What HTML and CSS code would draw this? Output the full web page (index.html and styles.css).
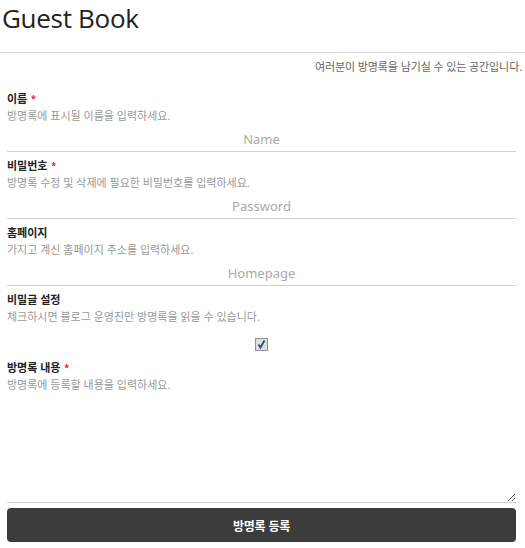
FILE: index.html
```html
<!DOCTYPE html>
<html lang="ko">

<head>
    <meta charset="UTF-8">
    <meta name="viewport" content="width=device-width, initial-scale=1.0">
    <title>Guest Book</title>
    <link rel="stylesheet" href="styles.css">
</head>

<body>

    <div class="header">
        <h1>Guest Book</h1>
    </div>
    <p class="intro">여러분이 방명록을 남기실 수 있는 공간입니다.</p>

    <form class="guest-form">
        <div class="field">
            <label for="name">이름 <span class="req">*</span></label>
            <p class="help">방명록에 표시될 이름을 입력하세요.</p>
            <input type="text" id="name" placeholder="Name">
        </div>

        <div class="field">
            <label for="password">비밀번호 <span class="req">*</span></label>
            <p class="help">방명록 수정 및 삭제에 필요한 비밀번호를 입력하세요.</p>
            <input type="password" id="password" placeholder="Password">
        </div>

        <div class="field">
            <label for="homepage">홈페이지</label>
            <p class="help">가지고 계신 홈페이지 주소를 입력하세요.</p>
            <input type="text" id="homepage" placeholder="Homepage">
        </div>

        <div class="field">
            <label for="secret">비밀글 설정</label>
            <p class="help">체크하시면 블로그 운영진만 방명록을 읽을 수 있습니다.</p>
            <div class="check-row">
                <input type="checkbox" id="secret" class="check" checked>
            </div>
        </div>

        <div class="field">
            <label for="content">방명록 내용 <span class="req">*</span></label>
            <p class="help">방명록에 등록할 내용을 입력하세요.</p>
            <textarea id="content"></textarea>
        </div>

        <button type="button" class="submit-btn">방명록 등록</button>
    </form>

</body>

</html>
```

FILE: styles.css
```css
body {
    margin: 0;
    font-family: "Noto Sans", "Noto Sans CJK KR", sans-serif;
    color: #222;
    background: #fff;
}

.header {
    border-bottom: 1px solid #d6d6d6;
    height: 52px;
}

.header h1 {
    margin: 0;
    padding: 0 2px;
    font-family: "Open Sans", "Noto Sans", sans-serif;
    font-weight: normal;
    font-size: 26px;
    line-height: 36px;
    color: #222;
    letter-spacing: -0.3px;
}

.intro {
    margin: 5px 3px 15px 0;
    text-align: right;
    font-size: 11px;
    line-height: 17px;
    letter-spacing: -0.1px;
    color: #666;
}

.guest-form {
    padding: 0 9px 0 7px;
}

.field {
    margin-bottom: 5px;
}

.field label {
    display: block;
    font-size: 11px;
    line-height: 17px;
    font-weight: 600;
    letter-spacing: 0;
    color: #222;
}

.req {
    color: #e00;
    font-size: 9px;
    vertical-align: 1px;
    margin-left: 1px;
}

.help {
    margin: 0;
    font-size: 11px;
    line-height: 17px;
    letter-spacing: 0;
    color: #999;
}

.field input[type="text"],
.field input[type="password"] {
    display: block;
    box-sizing: border-box;
    width: 100%;
    height: 28px;
    padding: 3px 0 0;
    border: none;
    border-bottom: 1px solid #d0d0d0;
    font-family: "Noto Sans", sans-serif;
    font-size: 13px;
    text-align: center;
    color: #333;
    outline: none;
}

.field input::placeholder {
    color: #aaa;
}

.check-row {
    display: flex;
    justify-content: center;
    height: 29px;
}

.check {
    appearance: none;
    box-sizing: border-box;
    width: 13px;
    height: 13px;
    margin: 13px 0 0;
    border: 1px solid #8f8f8f;
    background-color: #dedede;
    background-repeat: no-repeat;
    background-position: center;
}

.check:checked {
    background-image: url("data:image/svg+xml,%3Csvg xmlns='http://www.w3.org/2000/svg' width='11' height='11' viewBox='0 0 11 11'%3E%3Cpath d='M2.5 5.5 L4.5 8.5 L8.5 1.5' fill='none' stroke='%2334488f' stroke-width='1.8'/%3E%3C/svg%3E");
}

.field textarea {
    display: block;
    box-sizing: border-box;
    width: 100%;
    height: 110px;
    border: none;
    border-bottom: 1px solid #d0d0d0;
    resize: vertical;
    outline: none;
}

.submit-btn {
    display: block;
    width: 100%;
    height: 34px;
    margin-top: 2px;
    border: none;
    border-radius: 4px;
    background-color: #3c3c3c;
    color: #fff;
    font-family: "Noto Sans CJK KR", sans-serif;
    font-size: 12px;
    font-weight: bold;
    letter-spacing: -0.3px;
}
```
